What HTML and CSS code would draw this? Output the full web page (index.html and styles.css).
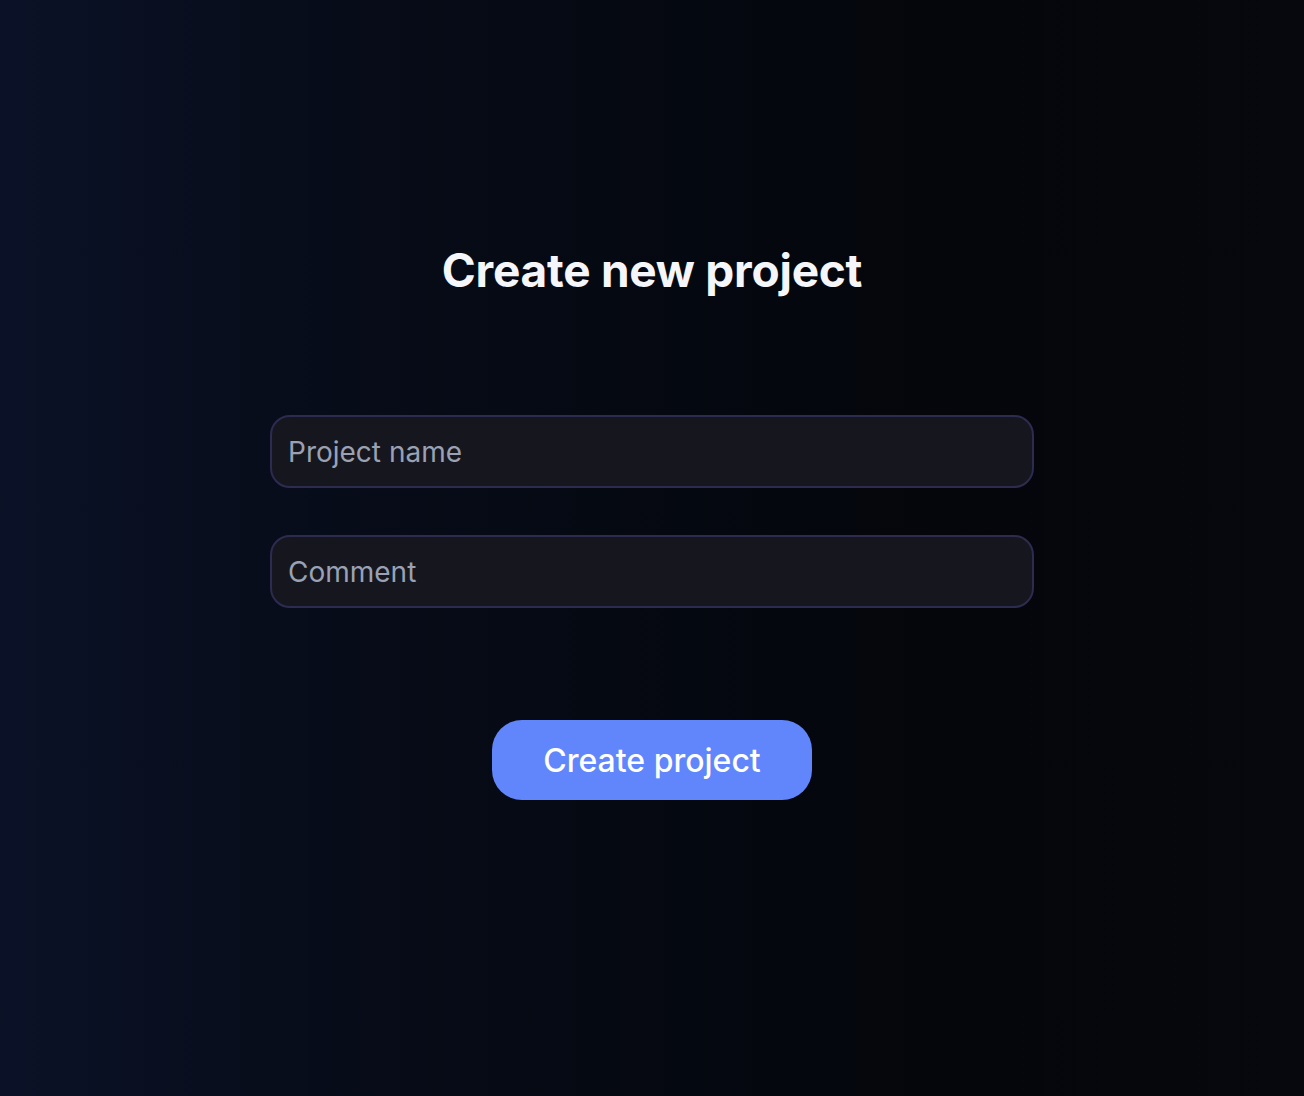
FILE: index.html
```html
<!DOCTYPE html>
<html lang="en">
<head>
  <meta charset="UTF-8" />
  <meta name="viewport" content="width=device-width, initial-scale=1" />
  <title>Create new project</title>
  <link rel="stylesheet" href="styles.css">
</head>
<body>
  <div class="page">
    <form class="project-form" onsubmit="return false;">
      <h1 class="title">Create new project</h1>
      <div class="fields">
        <input class="field" type="text" placeholder="Project name" />
        <input class="field" type="text" placeholder="Comment" />
      </div>
      <button class="create-btn" type="submit">Create project</button>
    </form>
  </div>
</body>
</html>
```

FILE: styles.css
```css
html, body {
  margin: 0;
  padding: 0;
  height: 100%;
}

body {
  font-family: 'Inter', 'Noto Sans', sans-serif;
  background: linear-gradient(to right, #0b1227 0%, #080d1c 20%, #060a14 40%, #04070e 60%, #04060b 75%, #06080e 100%);
  color: #f4f5f8;
  overflow: hidden;
}

.page {
  display: flex;
  justify-content: center;
  padding-top: 243px;
}

.project-form {
  width: 764px;
  display: flex;
  flex-direction: column;
  align-items: center;
}

.title {
  margin: 0;
  font-size: 46px;
  line-height: 54px;
  font-weight: 700;
  letter-spacing: -0.25px;
  color: #f5f6fa;
}

.fields {
  width: 100%;
  display: flex;
  flex-direction: column;
  gap: 47px;
  margin-top: 118px;
}

.field {
  box-sizing: border-box;
  width: 100%;
  height: 73px;
  padding: 0 16px;
  background: #16171e;
  border: 2px solid #2d2b50;
  border-radius: 20px;
  font-family: inherit;
  font-size: 28px;
  color: #e6e8ef;
  outline: none;
}

.field::placeholder {
  color: #9aa1b4;
}

.create-btn {
  margin-top: 112px;
  width: 320px;
  height: 80px;
  border: none;
  border-radius: 30px;
  background: #6185fb;
  color: #fff;
  font-family: inherit;
  font-size: 32px;
  font-weight: 500;
  cursor: pointer;
}

.create-btn:hover {
  background: #5277f0;
}
```
